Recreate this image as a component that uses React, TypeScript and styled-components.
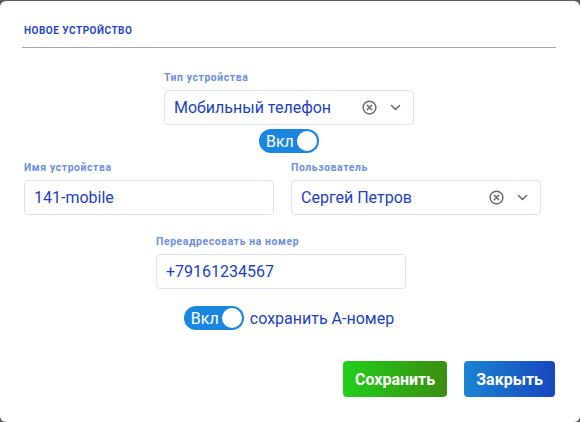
import React, { useState } from 'react';
import styled, { createGlobalStyle } from 'styled-components';

const GlobalStyle = createGlobalStyle`
  html, body {
    margin: 0;
    padding: 0;
    background: #5a5a5a;
    font-family: Roboto, "Liberation Sans", sans-serif;
  }
`;

const Dialog = styled.div`
  box-sizing: border-box;
  width: 580px;
  height: 421px;
  margin-top: 1px;
  background: #fff;
  border-radius: 6px;
  padding: 24px 24px 0 22px;
  display: flex;
  flex-direction: column;
`;

const Title = styled.div`
  font-size: 10px;
  font-weight: 700;
  color: #1f48c9;
  letter-spacing: 0.5px;
  line-height: 12px;
  padding: 0 0 10px 2px;
  border-bottom: 1px solid #a8a8a8;
`;

const Label = styled.div`
  font-size: 10.4px;
  font-weight: 700;
  color: #6b8de6;
  letter-spacing: 0.6px;
  margin-bottom: 6px;
  line-height: 12px;
`;

const Field = styled.div`
  width: 250px;
  display: flex;
  flex-direction: column;
`;

const Box = styled.div`
  box-sizing: border-box;
  height: 35px;
  border: 1px solid #dce3ef;
  border-radius: 4px;
  display: flex;
  align-items: center;
  padding: 0 12px 0 9px;
  font-size: 16px;
  color: #1c3fc4;
`;

const Value = styled.span`
  flex: 1;
`;

const Icons = styled.span`
  display: flex;
  align-items: center;
  gap: 13px;
`;

const Center = styled.div<{ $top: number; $shift?: number }>`
  display: flex;
  justify-content: center;
  margin-top: ${(p) => p.$top}px;
  padding-right: ${(p) => p.$shift ?? 0}px;
`;

const Row = styled.div`
  display: flex;
  gap: 17px;
  margin-top: 9px;
  padding-left: 2px;
`;

const ToggleWrap = styled.label`
  display: flex;
  align-items: center;
  gap: 6px;
  font-size: 16px;
  color: #1c3fc4;
  cursor: pointer;
`;

const Pill = styled.span<{ $on: boolean }>`
  box-sizing: border-box;
  width: 60px;
  height: 24px;
  border-radius: 12px;
  background: ${(p) => (p.$on ? '#1a86df' : '#b9c2d0')};
  display: flex;
  align-items: center;
  justify-content: space-between;
  padding: 0 2px 0 7px;
  color: #fff;
  font-size: 16px;
`;

const Knob = styled.span`
  width: 20px;
  height: 20px;
  border-radius: 50%;
  background: #fff;
`;

const Footer = styled.div`
  display: flex;
  justify-content: flex-end;
  gap: 17px;
  margin-top: 31px;
  padding-right: 1px;
`;

const Button = styled.button<{ $from: string; $to: string }>`
  height: 36px;
  border: none;
  border-radius: 4px;
  padding: 0 12px;
  font-family: Roboto, "Liberation Sans", sans-serif;
  font-size: 16px;
  font-weight: 700;
  color: #fff;
  background: linear-gradient(90deg, ${(p) => p.$from}, ${(p) => p.$to});
  cursor: pointer;
`;

const ClearIcon = () => (
  <svg width="15" height="15" viewBox="0 0 16 16" fill="none" stroke="#6b6b6b" strokeWidth="1.6" strokeLinecap="round">
    <circle cx="8" cy="8" r="6.8" />
    <path d="M5.6 5.6l4.8 4.8M10.4 5.6l-4.8 4.8" />
  </svg>
);

const Chevron = () => (
  <svg width="11" height="7" viewBox="0 0 11 7" fill="none" stroke="#6b6b6b" strokeWidth="1.6" strokeLinecap="round" strokeLinejoin="round">
    <path d="M1.5 1.5l4 4 4-4" />
  </svg>
);

function Toggle({ label }: { label?: string }) {
  const [on, setOn] = useState(true);
  return (
    <ToggleWrap onClick={() => setOn(!on)}>
      <Pill $on={on}>
        {on ? 'Вкл' : ''}
        <Knob />
      </Pill>
      {label && <span>{label}</span>}
    </ToggleWrap>
  );
}

function Select({ value }: { value: string }) {
  return (
    <Box>
      <Value>{value}</Value>
      <Icons>
        <ClearIcon />
        <Chevron />
      </Icons>
    </Box>
  );
}

export default function App() {
  return (
    <>
      <GlobalStyle />
      <Dialog>
        <Title>НОВОЕ УСТРОЙСТВО</Title>
        <Center $top={24}>
          <Field>
            <Label>Тип устройства</Label>
            <Select value="Мобильный телефон" />
          </Field>
        </Center>
        <Center $top={4}>
          <Toggle />
        </Center>
        <Row>
          <Field>
            <Label>Имя устройства</Label>
            <Box>141-mobile</Box>
          </Field>
          <Field>
            <Label>Пользователь</Label>
            <Select value="Сергей Петров" />
          </Field>
        </Row>
        <Center $top={21} $shift={16}>
          <Field>
            <Label>Переадресовать на номер</Label>
            <Box>+79161234567</Box>
          </Field>
        </Center>
        <Center $top={17}>
          <Toggle label="сохранить А-номер" />
        </Center>
        <Footer>
          <Button $from="#22cf1c" $to="#3a8d0f">Сохранить</Button>
          <Button $from="#1a84d2" $to="#1846bd">Закрыть</Button>
        </Footer>
      </Dialog>
    </>
  );
}
